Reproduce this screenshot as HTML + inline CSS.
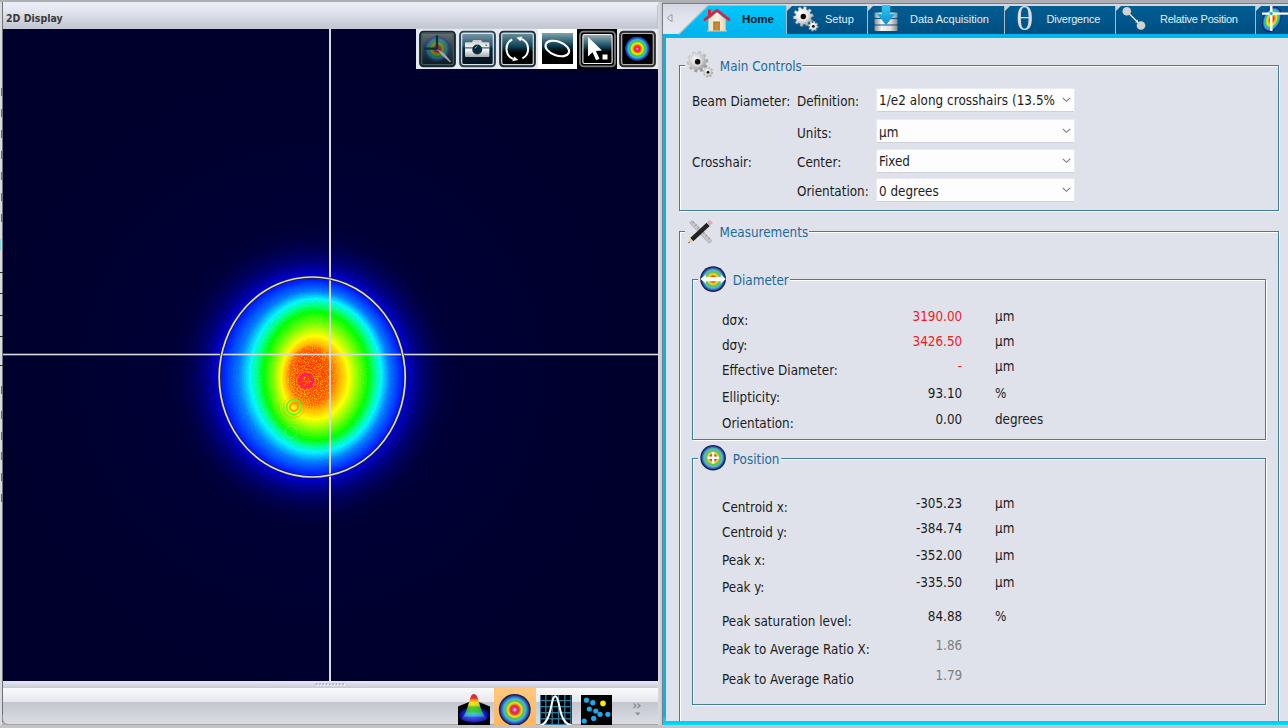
<!DOCTYPE html>
<html lang="en"><head><meta charset="utf-8"><title>2D Display</title>
<style>
html,body{margin:0;padding:0}
body{width:1288px;height:728px;position:relative;overflow:hidden;background:#b6b6b6;font-family:'DejaVu Sans Condensed','Liberation Sans',sans-serif;font-size:13.33px;color:#1c1c1c}
.a{position:absolute}
.t{position:absolute;white-space:nowrap;line-height:16px;height:16px}
.r{text-align:right}
.lg{color:#1c6a9b}
.red{color:#ee1c24}
.gr{color:#808080}
.fs{position:absolute;border:1px solid #3f7ca2;box-shadow:1px 1px 0 #fff, inset 1px 1px 0 #fff}
.cb{position:absolute;background:#fdfdfe;box-shadow:0 1px 0 #cdd0d9,0 0 0 1px rgba(236,238,244,.7);height:22px;width:197px;left:877px}
.cb span{position:absolute;left:3px;top:3px;line-height:16px;white-space:nowrap}
.cb svg{position:absolute;right:3px;top:7.800px}
.mask{position:absolute;background:#dfe2ea}
.tab{position:absolute;top:6px;height:28px;background:linear-gradient(#015d90,#01558a 60%,#004f7f)}
.tab i{position:absolute;left:0;top:0;width:1px;height:28px;background:#aeb9c4}
.tab b{position:absolute;left:1px;top:0;width:0;height:0;border-top:5px solid #c9d2da;border-right:5px solid transparent}
.tt{position:absolute;top:11.5px;line-height:14px;font-family:'Liberation Sans',sans-serif;font-size:11px;color:#e4edf4;white-space:nowrap}
</style></head><body>

<div class="a" style="left:0;top:0;width:1288px;height:3px;background:#adafb3"></div>
<div class="a" style="left:0;top:725px;width:1288px;height:3px;background:#c3c3c3"></div>
<div class="a" style="left:0;top:2px;width:2px;height:723px;background:#d9dae0"></div>
<div class="a" style="left:2px;top:2px;width:1px;height:720px;background:#707278"></div>
<div class="a" style="left:3px;top:2px;width:655px;height:27px;background:linear-gradient(#ebeef6,#e5e8f1 28%,#c3c7d2 94%,#c9cdd7)"></div>
<div class="t" style="left:6px;top:11px;font-family:'DejaVu Sans Condensed','Liberation Sans',sans-serif;font-weight:bold;font-size:10.5px;color:#3a3a3a;line-height:14px">2D Display</div>
<svg class="a" style="left:3px;top:29px" width="655" height="652" viewBox="3 29 655 652">
<rect x="3" y="29" width="655" height="652" fill="#00002d"/><defs><radialGradient id="wh"><stop offset="0" stop-color="#000038"/><stop offset=".46" stop-color="#000036"/><stop offset=".72" stop-color="#000030"/><stop offset="1" stop-color="#00002d"/></radialGradient></defs><ellipse cx="312" cy="377" rx="330" ry="330" fill="url(#wh)"/>
<ellipse cx="312.0" cy="377.0" rx="150.0" ry="157.0" fill="#000036"/>
<ellipse cx="312.0" cy="377.0" rx="147.3" ry="154.3" fill="#000037"/>
<ellipse cx="312.0" cy="377.0" rx="144.7" ry="151.7" fill="#000038"/>
<ellipse cx="312.0" cy="377.0" rx="142.0" ry="149.0" fill="#000039"/>
<ellipse cx="312.0" cy="377.0" rx="139.3" ry="146.3" fill="#00003a"/>
<ellipse cx="312.0" cy="377.0" rx="136.7" ry="143.7" fill="#00003b"/>
<ellipse cx="312.0" cy="377.0" rx="134.0" ry="141.0" fill="#00003c"/>
<ellipse cx="312.0" cy="377.0" rx="132.0" ry="139.0" fill="#00003f"/>
<ellipse cx="312.0" cy="377.0" rx="130.0" ry="137.0" fill="#000043"/>
<ellipse cx="312.0" cy="377.0" rx="128.0" ry="135.0" fill="#000046"/>
<ellipse cx="312.0" cy="377.0" rx="126.0" ry="133.0" fill="#000049"/>
<ellipse cx="312.0" cy="377.0" rx="124.0" ry="131.0" fill="#00004d"/>
<ellipse cx="312.0" cy="377.0" rx="122.0" ry="129.0" fill="#000050"/>
<ellipse cx="312.0" cy="377.0" rx="120.0" ry="127.0" fill="#000056"/>
<ellipse cx="312.0" cy="377.0" rx="118.0" ry="125.0" fill="#00005d"/>
<ellipse cx="312.0" cy="377.0" rx="116.0" ry="123.0" fill="#000063"/>
<ellipse cx="312.0" cy="377.0" rx="114.0" ry="121.0" fill="#000069"/>
<ellipse cx="312.0" cy="377.0" rx="112.0" ry="119.0" fill="#000070"/>
<ellipse cx="312.0" cy="377.0" rx="110.0" ry="117.0" fill="#000076"/>
<ellipse cx="312.0" cy="377.0" rx="108.5" ry="115.5" fill="#00007e"/>
<ellipse cx="312.0" cy="377.0" rx="107.0" ry="114.0" fill="#000086"/>
<ellipse cx="312.0" cy="377.0" rx="105.5" ry="112.5" fill="#00008e"/>
<ellipse cx="312.0" cy="377.0" rx="104.0" ry="111.0" fill="#000095"/>
<ellipse cx="312.0" cy="377.0" rx="102.5" ry="109.5" fill="#00009d"/>
<ellipse cx="312.0" cy="377.0" rx="101.0" ry="108.0" fill="#0000a5"/>
<ellipse cx="312.0" cy="377.0" rx="100.0" ry="107.0" fill="#0000ad"/>
<ellipse cx="312.0" cy="377.0" rx="99.0" ry="106.0" fill="#0000b6"/>
<ellipse cx="312.0" cy="377.0" rx="98.0" ry="105.0" fill="#0000be"/>
<ellipse cx="312.0" cy="377.0" rx="97.0" ry="104.0" fill="#0000c6"/>
<ellipse cx="312.0" cy="377.0" rx="96.0" ry="103.0" fill="#0000cf"/>
<ellipse cx="312.0" cy="377.0" rx="95.0" ry="102.0" fill="#0000d7"/>
<ellipse cx="312.0" cy="377.0" rx="94.1" ry="101.2" fill="#0006dd"/>
<ellipse cx="312.0" cy="377.0" rx="93.2" ry="100.3" fill="#000de3"/>
<ellipse cx="312.0" cy="377.0" rx="92.2" ry="99.5" fill="#0013ea"/>
<ellipse cx="312.0" cy="377.0" rx="91.3" ry="98.7" fill="#0019f0"/>
<ellipse cx="312.0" cy="377.0" rx="90.4" ry="97.8" fill="#0020f6"/>
<ellipse cx="312.0" cy="377.0" rx="89.5" ry="97.0" fill="#0026fc"/>
<ellipse cx="312.3" cy="376.9" rx="87.2" ry="95.1" fill="#0035fc"/>
<ellipse cx="312.7" cy="376.8" rx="84.8" ry="93.2" fill="#0045fd"/>
<ellipse cx="313.0" cy="376.8" rx="82.5" ry="91.2" fill="#0054fe"/>
<ellipse cx="313.3" cy="376.7" rx="80.2" ry="89.3" fill="#0063fe"/>
<ellipse cx="313.7" cy="376.6" rx="77.8" ry="87.4" fill="#0073fe"/>
<ellipse cx="314.0" cy="376.5" rx="75.5" ry="85.5" fill="#0082ff"/>
<ellipse cx="314.2" cy="376.3" rx="74.0" ry="84.2" fill="#0095ff"/>
<ellipse cx="314.5" cy="376.2" rx="72.5" ry="82.8" fill="#00a8ff"/>
<ellipse cx="314.8" cy="376.0" rx="71.0" ry="81.5" fill="#00bcff"/>
<ellipse cx="315.0" cy="375.8" rx="69.5" ry="80.2" fill="#00cfff"/>
<ellipse cx="315.2" cy="375.7" rx="68.0" ry="78.8" fill="#00e2ff"/>
<ellipse cx="315.5" cy="375.5" rx="66.5" ry="77.5" fill="#00f5ff"/>
<ellipse cx="315.6" cy="375.5" rx="65.3" ry="76.4" fill="#00f7eb"/>
<ellipse cx="315.7" cy="375.5" rx="64.2" ry="75.3" fill="#00f8d7"/>
<ellipse cx="315.8" cy="375.5" rx="63.0" ry="74.2" fill="#00fac3"/>
<ellipse cx="315.8" cy="375.5" rx="61.8" ry="73.2" fill="#00fcaf"/>
<ellipse cx="315.9" cy="375.5" rx="60.7" ry="72.1" fill="#00fd9b"/>
<ellipse cx="316.0" cy="375.5" rx="59.5" ry="71.0" fill="#00ff87"/>
<ellipse cx="316.0" cy="375.6" rx="58.4" ry="70.0" fill="#00ff70"/>
<ellipse cx="316.0" cy="375.7" rx="57.3" ry="69.0" fill="#00ff5a"/>
<ellipse cx="316.0" cy="375.8" rx="56.2" ry="68.0" fill="#00ff44"/>
<ellipse cx="316.0" cy="375.8" rx="55.2" ry="67.0" fill="#00ff2d"/>
<ellipse cx="316.0" cy="375.9" rx="54.1" ry="66.0" fill="#00ff16"/>
<ellipse cx="316.0" cy="376.0" rx="53.0" ry="65.0" fill="#00ff00"/>
<ellipse cx="316.0" cy="376.2" rx="51.3" ry="63.0" fill="#16ff00"/>
<ellipse cx="316.0" cy="376.3" rx="49.7" ry="61.0" fill="#2bff00"/>
<ellipse cx="316.0" cy="376.5" rx="48.0" ry="59.0" fill="#41ff00"/>
<ellipse cx="316.0" cy="376.7" rx="46.3" ry="57.0" fill="#57ff00"/>
<ellipse cx="316.0" cy="376.8" rx="44.7" ry="55.0" fill="#6cff00"/>
<ellipse cx="316.0" cy="377.0" rx="43.0" ry="53.0" fill="#82ff00"/>
<ellipse cx="315.8" cy="377.1" rx="41.6" ry="51.2" fill="#97ff00"/>
<ellipse cx="315.7" cy="377.2" rx="40.2" ry="49.5" fill="#acff00"/>
<ellipse cx="315.5" cy="377.2" rx="38.8" ry="47.8" fill="#c0ff00"/>
<ellipse cx="315.3" cy="377.3" rx="37.3" ry="46.0" fill="#d5ff00"/>
<ellipse cx="315.2" cy="377.4" rx="35.9" ry="44.2" fill="#eaff00"/>
<ellipse cx="315.0" cy="377.5" rx="34.5" ry="42.5" fill="#ffff00"/>
<ellipse cx="314.7" cy="377.4" rx="33.2" ry="40.9" fill="#fff100"/>
<ellipse cx="314.3" cy="377.3" rx="32.0" ry="39.3" fill="#ffe300"/>
<ellipse cx="314.0" cy="377.2" rx="30.8" ry="37.8" fill="#ffd400"/>
<ellipse cx="313.7" cy="377.2" rx="29.5" ry="36.2" fill="#ffc600"/>
<ellipse cx="313.3" cy="377.1" rx="28.2" ry="34.6" fill="#ffb800"/>
<ellipse cx="313.0" cy="377.0" rx="27.0" ry="33.0" fill="#ffaa00"/>
<ellipse cx="312.7" cy="376.8" rx="26.2" ry="32.3" fill="#ff9e00"/>
<ellipse cx="312.3" cy="376.7" rx="25.3" ry="31.7" fill="#ff9300"/>
<ellipse cx="312.0" cy="376.5" rx="24.5" ry="31.0" fill="#ff8700"/>
<ellipse cx="311.7" cy="376.3" rx="23.7" ry="30.3" fill="#ff7b00"/>
<ellipse cx="311.3" cy="376.2" rx="22.8" ry="29.7" fill="#ff7000"/>
<ellipse cx="311.0" cy="376.0" rx="22.0" ry="29.0" fill="#ff6400"/>
<ellipse cx="310.8" cy="376.0" rx="20.8" ry="27.8" fill="#ff5e00"/>
<ellipse cx="310.7" cy="376.0" rx="19.7" ry="26.7" fill="#ff5700"/>
<ellipse cx="310.5" cy="376.0" rx="18.5" ry="25.5" fill="#ff5100"/>
<ellipse cx="310.3" cy="376.0" rx="17.3" ry="24.3" fill="#ff4b00"/>
<ellipse cx="310.2" cy="376.0" rx="16.2" ry="23.2" fill="#ff4400"/>
<ellipse cx="310.0" cy="376.0" rx="15.0" ry="22.0" fill="#ff3e00"/>
<ellipse cx="309.8" cy="376.2" rx="13.7" ry="20.2" fill="#ff3c01"/>
<ellipse cx="309.7" cy="376.3" rx="12.3" ry="18.3" fill="#ff3903"/>
<ellipse cx="309.5" cy="376.5" rx="11.0" ry="16.5" fill="#ff3704"/>
<ellipse cx="309.3" cy="376.7" rx="9.7" ry="14.7" fill="#ff3505"/>
<ellipse cx="309.2" cy="376.8" rx="8.3" ry="12.8" fill="#ff3207"/>
<ellipse cx="309.0" cy="377.0" rx="7.0" ry="11.0" fill="#ff3008"/>
<defs><filter id="nz" x="0" y="0" width="1" height="1" color-interpolation-filters="sRGB"><feTurbulence type="fractalNoise" baseFrequency="0.75" numOctaves="2" seed="7" result="t"/><feColorMatrix in="t" type="matrix" values="0 0 0 0 1  0 0 0 0 .85  0 0 0 0 0  0 0 0 3.2 -1.55" result="c"/><feComposite in="c" in2="SourceGraphic" operator="in"/></filter><filter id="nz2" x="0" y="0" width="1" height="1" color-interpolation-filters="sRGB"><feTurbulence type="fractalNoise" baseFrequency="0.6" numOctaves="2" seed="11" result="t"/><feColorMatrix in="t" type="matrix" values="0 0 0 0 1  0 0 0 0 1  0 0 0 0 1  0 0 0 2.4 -1.1" result="c"/><feComposite in="c" in2="SourceGraphic" operator="in"/></filter><radialGradient id="core"><stop offset="0" stop-color="#fff"/><stop offset=".7" stop-color="#fff" stop-opacity=".8"/><stop offset="1" stop-color="#fff" stop-opacity="0"/></radialGradient><radialGradient id="halo"><stop offset="0" stop-color="#fff" stop-opacity=".0"/><stop offset=".3" stop-color="#fff" stop-opacity=".5"/><stop offset=".8" stop-color="#fff" stop-opacity=".5"/><stop offset="1" stop-color="#fff" stop-opacity="0"/></radialGradient></defs>
<ellipse cx="311" cy="377" rx="34" ry="42" fill="url(#core)" filter="url(#nz)"/>
<ellipse cx="314" cy="377" rx="90" ry="98" fill="url(#halo)" filter="url(#nz2)" opacity=".22"/>
<g fill="none">
<circle cx="306" cy="381" r="6.5" stroke="#ff1090" stroke-width="1.6"/>
<circle cx="306" cy="381" r="9.5" stroke="#ff9020" stroke-width="1" opacity=".8"/>
<circle cx="294" cy="407" r="4" stroke="#ff9a00" stroke-width="2"/><circle cx="294" cy="407" r="7.5" stroke="#50ff20" stroke-width="1.6"/>
<circle cx="294" cy="407" r="10.5" stroke="#ffb000" stroke-width="1" opacity=".8"/>
<circle cx="306" cy="381" r="12.5" stroke="#ffe000" stroke-width="1.1" opacity="0.3"/>
<circle cx="294" cy="407" r="13.5" stroke="#ffe800" stroke-width="1.1" opacity="0.3"/>
<circle cx="306" cy="381" r="15.5" stroke="#ffe000" stroke-width="1.1" opacity="0.24"/>
<circle cx="294" cy="407" r="16.5" stroke="#ffe800" stroke-width="1.1" opacity="0.24"/>
<circle cx="306" cy="381" r="18.5" stroke="#ffe000" stroke-width="1.1" opacity="0.18"/>
<circle cx="294" cy="407" r="19.5" stroke="#ffe800" stroke-width="1.1" opacity="0.18"/>
<circle cx="306" cy="381" r="21.5" stroke="#ffe000" stroke-width="1.1" opacity="0.12"/>
<circle cx="294" cy="407" r="22.5" stroke="#ffe800" stroke-width="1.1" opacity="0.12"/>
<circle cx="207" cy="389" r="7" stroke="#000048" stroke-width="1.300" opacity=".5"/>
<circle cx="291" cy="432" r="6" stroke="#a0ffe0" stroke-width="1" opacity=".35"/>
</g>
<rect x="3" y="353.700" width="655" height="1.600" fill="#dadada"/>
<rect x="329" y="29" width="2" height="652" fill="#dadada"/>
<ellipse cx="312.2" cy="377" rx="93" ry="100" fill="none" stroke="#202020" stroke-width="3"/>
<ellipse cx="312.2" cy="377" rx="93" ry="100" fill="none" stroke="#dadad6" stroke-width="1.7"/>
</svg>
<div class="a" style="left:416px;top:29px;width:242px;height:40px;background:#e6e8f0"></div>
<svg class="a" style="left:419px;top:30px" width="37" height="38" viewBox="0 0 37 38"><defs><linearGradient id="g419" x1="0" y1="0" x2="0" y2="1"><stop offset="0" stop-color="#6b7579"/><stop offset=".45" stop-color="#2a4248"/><stop offset="1" stop-color="#051a20"/></linearGradient></defs><rect x="1" y="1.600" width="35" height="34.800" rx="3.500" fill="url(#g419)" stroke="#11292f" stroke-width="1.800"/><rect x="2.700" y="3.300" width="31.600" height="31.400" rx="2" fill="none" stroke="#46585c" stroke-width="1.200"/><defs><radialGradient id="rbd"><stop offset="0" stop-color="#ffd8f0"/><stop offset="0.1" stop-color="#ff30a0"/><stop offset="0.22" stop-color="#ff1a1a"/><stop offset="0.36" stop-color="#ffb000"/><stop offset="0.46" stop-color="#f4f000"/><stop offset="0.58" stop-color="#30d030"/><stop offset="0.72" stop-color="#20c8e8"/><stop offset="0.84" stop-color="#2858e0"/><stop offset="0.94" stop-color="#3a2a90"/><stop offset="1" stop-color="#182838"/></radialGradient></defs><circle cx="18.2" cy="18.9" r="13" fill="url(#rbd)" opacity=".4"/><path d="M18 5.300V18.700H5" fill="none" stroke="#0b2f38" stroke-width="2.300"/><path d="M18.300 19.300L25 22.900 32 31.600 31.200 32.400 22.700 25.200z" fill="#a0a2a2"/></svg>
<svg class="a" style="left:459px;top:30px" width="37" height="38" viewBox="0 0 37 38"><defs><linearGradient id="g459" x1="0" y1="0" x2="0" y2="1"><stop offset="0" stop-color="#86a3b0"/><stop offset=".44" stop-color="#1d4e64"/><stop offset=".47" stop-color="#00283c"/><stop offset="1" stop-color="#000e1c"/></linearGradient></defs><rect x="1" y="1.600" width="35" height="34.800" rx="3.500" fill="url(#g459)" stroke="#2b4456" stroke-width="1.800"/><rect x="2.700" y="3.300" width="31.600" height="31.400" rx="2" fill="none" stroke="#dbe3e8" stroke-width="1.200"/><defs><linearGradient id="cm" x1="0" y1="0" x2="0" y2="1"><stop offset="0" stop-color="#c4c6c8"/><stop offset=".3" stop-color="#e8e8e8"/><stop offset=".6" stop-color="#f2f2f2"/><stop offset="1" stop-color="#a4a6a8"/></linearGradient></defs><path d="M7 12.300h5.800l1.600-2.300h7.600l1.600 2.300h5.800a1 1 0 0 1 1 1v12.700a1 1 0 0 1-1 1h-22.400a1 1 0 0 1-1-1v-12.700a1 1 0 0 1 1-1z" fill="url(#cm)"/><path d="M6 17.900h24.400" stroke="#1b4a5e" stroke-width="1"/><circle cx="18.2" cy="19.500" r="5" fill="#0a3446"/><circle cx="18.2" cy="19.500" r="3.500" fill="#062a3c"/><path d="M15.900 18.300l2.500-2.300" stroke="#a8c8d4" stroke-width="1"/><circle cx="27.200" cy="15.300" r="1.100" fill="#7a98a6"/></svg>
<svg class="a" style="left:499px;top:30px" width="37" height="38" viewBox="0 0 37 38"><defs><linearGradient id="g499" x1="0" y1="0" x2="0" y2="1"><stop offset="0" stop-color="#7698a5"/><stop offset=".42" stop-color="#0f4558"/><stop offset=".6" stop-color="#000"/><stop offset="1" stop-color="#000"/></linearGradient></defs><rect x="1" y="1.600" width="35" height="34.800" rx="3.500" fill="url(#g499)" stroke="#232e34" stroke-width="1.800"/><rect x="2.700" y="3.300" width="31.600" height="31.400" rx="2" fill="none" stroke="#d0d8dc" stroke-width="1.200"/><g fill="none" stroke="#fff" stroke-width="2"><path d="M23.37 28.44A10.8 10.8 0 0 0 22.35 8.89"/><path d="M13.23 9.36A10.8 10.8 0 0 0 14.25 28.91"/></g><path d="M23.32 6.48L21.37 11.30L17.33 7.84z" fill="#fff"/><path d="M13.28 31.32L15.23 26.50L19.27 29.96z" fill="#fff"/></svg>
<div class="a" style="left:538px;top:29px;width:39px;height:40px;background:#fff"></div>
<svg class="a" style="left:542px;top:33px" width="31" height="31" viewBox="0 0 31 31"><defs><linearGradient id="g4" x1="0" y1="0" x2="0" y2="1"><stop offset="0" stop-color="#7fa3b0"/><stop offset=".4" stop-color="#0d4052"/><stop offset=".62" stop-color="#000"/><stop offset="1" stop-color="#000"/></linearGradient></defs><rect width="31" height="31" fill="url(#g4)"/><ellipse cx="15.3" cy="15.5" rx="12.3" ry="7" transform="rotate(20 15.3 15.5)" fill="none" stroke="#fff" stroke-width="2.1"/></svg>
<div class="a" style="left:577px;top:29px;width:40px;height:40px;background:#000"></div>
<svg class="a" style="left:579px;top:30px" width="37" height="38" viewBox="0 0 37 38"><defs><linearGradient id="g579" x1="0" y1="0" x2="0" y2="1"><stop offset="0" stop-color="#9ab2bc"/><stop offset=".42" stop-color="#10465a"/><stop offset=".6" stop-color="#000"/><stop offset="1" stop-color="#000"/></linearGradient></defs><rect x="1" y="1.600" width="35" height="34.800" rx="3.500" fill="#000" stroke="#7b7b7b" stroke-width="1.800"/><rect x="3.900" y="4.500" width="29.200" height="29" rx="1.500" fill="url(#g579)" stroke="#f2f2f2" stroke-width="1.100"/><path d="M9 7v19.500l4.500-4.200 3.600 8 3.400-1.600-3.600-7.700 6.100-.5z" fill="#fff"/><rect x="23.500" y="24.500" width="5" height="5" fill="#fff"/></svg>
<svg class="a" style="left:619px;top:30px" width="37" height="38" viewBox="0 0 37 38"><defs><linearGradient id="g619" x1="0" y1="0" x2="0" y2="1"><stop offset="0" stop-color="#000"/><stop offset="1" stop-color="#000"/></linearGradient></defs><rect x="1" y="1.600" width="35" height="34.800" rx="3.500" fill="url(#g619)" stroke="#303030" stroke-width="1.800"/><rect x="2.700" y="3.300" width="31.600" height="31.400" rx="2" fill="none" stroke="#b4b4b4" stroke-width="1.200"/><defs><radialGradient id="rb6"><stop offset="0" stop-color="#ffd8f0"/><stop offset="0.1" stop-color="#ff30a0"/><stop offset="0.22" stop-color="#ff1a1a"/><stop offset="0.36" stop-color="#ffb000"/><stop offset="0.46" stop-color="#f4f000"/><stop offset="0.58" stop-color="#30d030"/><stop offset="0.72" stop-color="#20c8e8"/><stop offset="0.84" stop-color="#2858e0"/><stop offset="0.94" stop-color="#3a2a90"/><stop offset="1" stop-color="#000"/></radialGradient></defs><circle cx="18.3" cy="18.700" r="12.500" fill="url(#rb6)"/></svg>
<div class="a" style="left:3px;top:681px;width:655px;height:7px;background:linear-gradient(#e6e9f1,#c6cad7)"></div>
<svg class="a" style="left:315px;top:682px" width="32" height="6" viewBox="0 0 32 6"><rect x="1.8" y="2.2" width="1.6" height="1.6" fill="#fff"/><rect x="0.9" y="1.3" width="1.6" height="1.6" fill="#a2a6b5"/><rect x="5.1" y="2.2" width="1.6" height="1.6" fill="#fff"/><rect x="4.2" y="1.3" width="1.6" height="1.6" fill="#a2a6b5"/><rect x="8.4" y="2.2" width="1.6" height="1.6" fill="#fff"/><rect x="7.5" y="1.3" width="1.6" height="1.6" fill="#a2a6b5"/><rect x="11.7" y="2.2" width="1.6" height="1.6" fill="#fff"/><rect x="10.8" y="1.3" width="1.6" height="1.6" fill="#a2a6b5"/><rect x="15.0" y="2.2" width="1.6" height="1.6" fill="#fff"/><rect x="14.1" y="1.3" width="1.6" height="1.6" fill="#a2a6b5"/><rect x="18.3" y="2.2" width="1.6" height="1.6" fill="#fff"/><rect x="17.4" y="1.3" width="1.6" height="1.6" fill="#a2a6b5"/><rect x="21.6" y="2.2" width="1.6" height="1.6" fill="#fff"/><rect x="20.7" y="1.3" width="1.6" height="1.6" fill="#a2a6b5"/><rect x="24.9" y="2.2" width="1.6" height="1.6" fill="#fff"/><rect x="24.0" y="1.3" width="1.6" height="1.6" fill="#a2a6b5"/><rect x="28.2" y="2.2" width="1.6" height="1.6" fill="#fff"/><rect x="27.3" y="1.3" width="1.6" height="1.6" fill="#a2a6b5"/></svg>
<div class="a" style="left:3px;top:688px;width:655px;height:37px;border-radius:0 0 0 5px;background:linear-gradient(#fafafb,#e7e8ed 37%,#c3c6cf 38%,#dddee4)"></div>
<div class="a" style="left:2px;top:715px;width:20px;height:10px;border-left:1px solid #8d8f96;border-bottom:1px solid #9a9ca3;border-radius:0 0 0 6px;box-sizing:border-box"></div>
<div class="a" style="left:8px;top:724px;width:650px;height:1px;background:#a4a6ad"></div>
<div class="a" style="left:657px;top:5px;width:1px;height:24px;background:#bfc2cc"></div>
<div class="a" style="left:494px;top:688px;width:42px;height:37px;background:linear-gradient(#ffc880,#ffb65e)"></div>
<svg class="a" style="left:458px;top:692px" width="32" height="33" viewBox="0 0 32 33">
<defs><linearGradient id="pk" x1="0" y1="2" x2="0" y2="29" gradientUnits="userSpaceOnUse"><stop offset="0" stop-color="#c80830"/><stop offset=".15" stop-color="#f01010"/><stop offset=".22" stop-color="#ff8000"/><stop offset=".3" stop-color="#f8d800"/><stop offset=".41" stop-color="#f0e000"/><stop offset=".48" stop-color="#38c818"/><stop offset=".64" stop-color="#28c020"/><stop offset=".72" stop-color="#20c8c0"/><stop offset=".8" stop-color="#28a8e8"/><stop offset=".88" stop-color="#2030f0"/><stop offset="1" stop-color="#1810b0"/></linearGradient>
<radialGradient id="bs" cx=".5" cy=".5" r=".5"><stop offset="0" stop-color="#2828ff"/><stop offset=".72" stop-color="#1c14d8"/><stop offset="1" stop-color="#060338"/></radialGradient>
<linearGradient id="sh" x1="0" y1="0" x2="1" y2="0"><stop offset="0" stop-color="#000" stop-opacity=".3"/><stop offset=".45" stop-color="#fff" stop-opacity=".12"/><stop offset="1" stop-color="#000" stop-opacity=".25"/></linearGradient></defs>
<path d="M0 14.500L16 8 32 14.500V33H0z" fill="#000"/>
<ellipse cx="16" cy="23" rx="15.600" ry="8.200" fill="url(#bs)"/>
<path id="pkp" d="M15.700 2c-2 0-3 2.500-3.700 5-1 3.500-2.300 8-3.800 12-1.200 3.200-2.700 6-5.200 8 3 3.500 23 3.500 26 0-2.500-2-4-4.800-5.200-8-1.500-4-2.800-8.500-3.800-12-.7-2.500-2-5-4.300-5z" fill="url(#pk)"/>
<path d="M15.700 2c-2 0-3 2.500-3.700 5-1 3.500-2.300 8-3.800 12-1.200 3.200-2.700 6-5.200 8 3 3.500 23 3.500 26 0-2.500-2-4-4.800-5.200-8-1.500-4-2.800-8.500-3.800-12-.7-2.500-2-5-4.300-5z" fill="url(#sh)"/>
</svg>
<svg class="a" style="left:498px;top:693px" width="34" height="32" viewBox="0 0 34 32"><defs><radialGradient id="rb2"><stop offset="0" stop-color="#fff4ff"/><stop offset="0.1" stop-color="#cc58b8"/><stop offset="0.24" stop-color="#e82030"/><stop offset="0.36" stop-color="#f49018"/><stop offset="0.44" stop-color="#f0e424"/><stop offset="0.56" stop-color="#58bc48"/><stop offset="0.68" stop-color="#40c0cc"/><stop offset="0.8" stop-color="#3470d0"/><stop offset="0.89" stop-color="#28409c"/><stop offset="0.94" stop-color="#181e48"/><stop offset="1" stop-color="#181e48"/></radialGradient></defs><circle cx="16.750" cy="16.800" r="15.900" fill="url(#rb2)"/></svg>
<svg class="a" style="left:540px;top:695px" width="32" height="30" viewBox="0 0 32 30"><rect width="32" height="30" fill="#000"/><g stroke="#347ea1" stroke-width="1.300" fill="none"><path d="M0.3 0V30" /><path d="M5.8 0V30" /><path d="M12.2 0V30" /><path d="M18.5 0V30" /><path d="M24.8 0V30" /><path d="M30.9 0V30" /><path d="M0 5.6H31"/><path d="M0 11.7H31"/><path d="M0 17.7H31"/><path d="M0 23.8H31"/><path d="M0 29.5H31"/></g><path d="M0 30.500C6 29.500 8.800 22 10.400 15S13 1.300 15.200 1.300 18.800 8 20.200 15 24.800 29.500 32 30.500" fill="none" stroke="#fff" stroke-width="2"/></svg>
<svg class="a" style="left:581px;top:695px" width="31" height="30" viewBox="581 695 31 30"><rect x="581" y="695" width="31" height="30" fill="#000"/><circle cx="586.5" cy="700.2" r="2.600" fill="#1fa9ea"/><circle cx="592.8" cy="702.7" r="2.600" fill="#1fa9ea"/><circle cx="589.3" cy="709.0" r="2.600" fill="#1fa9ea"/><circle cx="595.8" cy="711.0" r="2.600" fill="#1fa9ea"/><circle cx="600.0" cy="714.3" r="2.600" fill="#1fa9ea"/><circle cx="607.8" cy="714.3" r="2.600" fill="#1fa9ea"/><circle cx="593.7" cy="718.4" r="2.600" fill="#1fa9ea"/><circle cx="584.2" cy="721.0" r="2.600" fill="#1fa9ea"/><circle cx="603" cy="703.4" r="2.800" fill="#f6f000"/></svg>
<svg class="a" style="left:632px;top:702px" width="10" height="15" viewBox="0 0 10 15"><path d="M1.500 1.500L4 3.800 1.500 6.100M5.500 1.500L8 3.800 5.500 6.100" fill="none" stroke="#8c8c8c" stroke-width="1.350"/><path d="M3 10.500h5.500L5.750 13.500z" fill="#8c8c8c"/></svg>
<div class="a" style="left:658px;top:2px;width:4px;height:723px;background:linear-gradient(90deg,#d9dbe5,#c6c8d2)"></div>
<div class="a" style="left:662px;top:3px;width:626px;height:1px;background:#7e7e7e"></div>
<div class="a" style="left:662px;top:4px;width:1px;height:721px;background:#7c7e83"></div>
<div class="a" style="left:663px;top:4px;width:625px;height:30px;background:linear-gradient(#d5d8e2,#e2e5ee 50%,#e6e8f0)"></div>
<div class="a" style="left:663px;top:34px;width:625px;height:691px;background:#00b7ee"></div>
<div class="a" style="left:663px;top:715px;width:625px;height:10px;background:linear-gradient(#00b7ee,#00dcf8 60%)"></div>
<div class="a" style="left:666px;top:38px;width:622px;height:683px;background:#dfe2ea"></div>
<svg class="a" style="left:666px;top:13px" width="8" height="10" viewBox="0 0 8 10"><path d="M6 1.200L1.200 5 6 8.800z" fill="none" stroke="#9a9a9a" stroke-width="1"/></svg>
<svg class="a" style="left:676px;top:4px" width="112" height="31" viewBox="676 4 112 31"><defs><linearGradient id="hm" x1="0" y1="0" x2="0" y2="1"><stop offset="0" stop-color="#00c8fa"/><stop offset="1" stop-color="#00b2ec"/></linearGradient></defs><path d="M678 35L708 5.500H786V35z" fill="url(#hm)"/><path d="M678.500 34.500L708 5.500" stroke="#b9bdc8" stroke-width="1.200" fill="none"/></svg>
<svg class="a" style="left:703px;top:7px" width="28" height="25" viewBox="0 0 28 25">
<defs><linearGradient id="wl" x1="0" y1="0" x2="1" y2="0"><stop offset="0" stop-color="#e9dcc0"/><stop offset=".5" stop-color="#fbf3e0"/><stop offset="1" stop-color="#e3d3b3"/></linearGradient></defs>
<path d="M5.300 12.500L14 5.200 22.700 12.500V24H5.300z" fill="url(#wl)"/>
<rect x="10.300" y="14.500" width="6.500" height="9.500" fill="#a86a22"/><rect x="11.300" y="15.500" width="4.500" height="8.500" fill="#c58a3a"/>
<path d="M5 2.600h3v5.500h-3z" fill="#d8203a"/>
<path d="M1.900 12.600L14 3.200l12.100 9.400" fill="none" stroke="#e0203c" stroke-width="2.600" stroke-linejoin="round" stroke-linecap="round"/>
<path d="M4 24h20" stroke="#d8cdb4" stroke-width="1"/>
</svg>
<div class="tt" style="left:742px;top:12px;font-weight:bold;color:#05131c;font-size:11.5px">Home</div>
<div class="tab" style="left:786px;width:81px"><i></i><b></b></div>
<div class="tab" style="left:867px;width:137px"><i></i><b></b></div>
<div class="tab" style="left:1004px;width:111px"><i></i><b></b></div>
<div class="tab" style="left:1115px;width:140px"><i></i><b></b></div>
<div class="tab" style="left:1255px;width:33px"><i></i><b></b></div>
<div class="tt" style="left:825px">Setup</div>
<div class="tt" style="left:910px">Data Acquisition</div>
<div class="tt" style="left:1046.5px;letter-spacing:-.2px">Divergence</div>
<div class="tt" style="left:1160px;letter-spacing:-.25px">Relative Position</div>
<svg class="a" style="left:792px;top:6px" width="28" height="27" viewBox="0 0 28 27"><defs><radialGradient id="gg" cx=".35" cy=".3" r=".8"><stop offset="0" stop-color="#fff"/><stop offset=".6" stop-color="#d8d8d8"/><stop offset="1" stop-color="#8c8c8c"/></radialGradient></defs><path d="M11.29 2.80L12.04 0.53L14.50 1.03L14.31 3.41L15.82 4.27L17.76 2.87L19.46 4.72L17.90 6.53L18.62 8.11L21.01 8.12L21.30 10.62L18.97 11.17L18.63 12.87L20.55 14.29L19.32 16.47L17.11 15.55L15.83 16.72L16.56 19.00L14.28 20.05L13.03 18.00L11.31 18.20L10.56 20.47L8.10 19.97L8.29 17.59L6.78 16.73L4.84 18.13L3.14 16.28L4.70 14.47L3.98 12.89L1.59 12.88L1.30 10.38L3.63 9.83L3.97 8.13L2.05 6.71L3.28 4.53L5.49 5.45L6.77 4.28L6.04 2.00L8.32 0.95L9.57 3.00z" fill="url(#gg)" stroke="#a8a8a8" stroke-width=".4" stroke-linejoin="round"/><circle cx="11.3" cy="10.5" r="4.3" fill="none" stroke="#fff" stroke-opacity=".5" stroke-width="1"/><circle cx="11.3" cy="10.5" r="2.7" fill="#0a0a0a"/><path d="M21.12 16.70L21.51 15.30L23.05 15.62L22.87 17.06L23.71 17.63L24.98 16.92L25.85 18.22L24.70 19.12L24.90 20.12L26.30 20.51L25.98 22.05L24.54 21.87L23.97 22.71L24.68 23.98L23.38 24.85L22.48 23.70L21.48 23.90L21.09 25.30L19.55 24.98L19.73 23.54L18.89 22.97L17.62 23.68L16.75 22.38L17.90 21.48L17.70 20.48L16.30 20.09L16.62 18.55L18.06 18.73L18.63 17.89L17.92 16.62L19.22 15.75L20.12 16.90z" fill="url(#gg)" stroke="#a8a8a8" stroke-width=".4" stroke-linejoin="round"/><circle cx="21.3" cy="20.3" r="3.0" fill="none" stroke="#fff" stroke-opacity=".5" stroke-width="1"/><circle cx="21.3" cy="20.3" r="1.4" fill="#0a0a0a"/></svg>
<svg class="a" style="left:873px;top:5px" width="26" height="27" viewBox="0 0 26 27">
<defs><linearGradient id="dk" x1="0" y1="0" x2="1" y2="0"><stop offset="0" stop-color="#8e8e8e"/><stop offset=".3" stop-color="#f4f4f4"/><stop offset=".7" stop-color="#e0e0e0"/><stop offset="1" stop-color="#8a8a8a"/></linearGradient>
<linearGradient id="ar" x1="0" y1="0" x2="0" y2="1"><stop offset="0" stop-color="#2ccbf4"/><stop offset="1" stop-color="#128ac6"/></linearGradient></defs>
<rect x="1.500" y="7.500" width="23" height="5.500" rx="1" fill="url(#dk)"/><rect x="1.500" y="14" width="23" height="5.500" rx="1" fill="url(#dk)"/><rect x="1.500" y="20.500" width="23" height="5.500" rx="1" fill="url(#dk)"/>
<path d="M8.800 0h8.400v9h4.800L13 20 4 9H8.800z" fill="url(#ar)"/></svg>
<div class="a" style="left:1015.5px;top:1px;font-family:'Liberation Serif',serif;font-size:33px;line-height:36px;color:#d9dde2;transform:scaleX(1.1);transform-origin:0 0">θ</div>
<svg class="a" style="left:1120px;top:5px" width="28" height="28" viewBox="1120 5 28 28"><path d="M1127 11.500L1141 25.500" stroke="#dcdcdc" stroke-width="1.600"/><path d="M1138 19.500v3h-3z" fill="#e6e6e6" transform="rotate(0)"/><circle cx="1126.800" cy="11.200" r="4.300" fill="#d2d2d2"/><circle cx="1141" cy="25.500" r="4.300" fill="#d2d2d2"/></svg>
<svg class="a" style="left:1258px;top:5px" width="30" height="30" viewBox="1258 5 30 30"><defs><radialGradient id="rbe"><stop offset="0" stop-color="#ff60a0"/><stop offset="0.18" stop-color="#ff2020"/><stop offset="0.36" stop-color="#ffb000"/><stop offset="0.5" stop-color="#e8f020"/><stop offset="0.64" stop-color="#30d040"/><stop offset="0.78" stop-color="#30b0f0"/><stop offset="0.9" stop-color="#3040c0"/><stop offset="1" stop-color="#0c1030"/></radialGradient></defs><ellipse cx="1271.800" cy="19.300" rx="8.800" ry="13.300" transform="rotate(25 1271.800 19.300)" fill="url(#rbe)"/><rect x="1270" y="6" width="2.500" height="25" fill="#fff"/><rect x="1262" y="12.500" width="26" height="2.200" fill="#fff"/><circle cx="1271.200" cy="13.500" r="1.600" fill="#18a0e8"/></svg>
<div class="fs" style="left:679px;top:65px;width:598px;height:144px"></div>
<div class="fs" style="left:679px;top:231px;width:598px;height:518px"></div>
<div class="fs" style="left:692px;top:279px;width:572px;height:159px"></div>
<div class="fs" style="left:692px;top:458px;width:572px;height:245px"></div>
<div class="a" style="left:663px;top:721px;width:625px;height:4px;background:linear-gradient(#00c8f2,#00e0fa)"></div>
<div class="a" style="left:658px;top:725px;width:630px;height:3px;background:#c3c3c3"></div>
<div class="mask" style="left:685px;top:52px;width:117px;height:26px"></div>
<div class="mask" style="left:685px;top:218px;width:124px;height:26px"></div>
<div class="mask" style="left:698px;top:266px;width:92px;height:27px"></div>
<div class="mask" style="left:698px;top:445px;width:83px;height:27px"></div>
<div class="t lg" style="left:719.8px;top:59.2px;">Main Controls</div>
<div class="t lg" style="left:719.6px;top:225px;">Measurements</div>
<div class="t lg" style="left:732.8px;top:273.4px;">Diameter</div>
<div class="t lg" style="left:732.8px;top:452px;">Position</div>
<svg class="a" style="left:686px;top:51px" width="29" height="28" viewBox="0 0 29 28"><defs><radialGradient id="gg2" cx=".35" cy=".3" r=".8"><stop offset="0" stop-color="#f0f0f0"/><stop offset=".55" stop-color="#c4c4c4"/><stop offset="1" stop-color="#808080"/></radialGradient></defs><path d="M11.59 2.80L12.37 0.43L14.93 0.95L14.72 3.43L16.30 4.32L18.32 2.86L20.08 4.78L18.46 6.68L19.21 8.32L21.70 8.33L22.00 10.92L19.57 11.49L19.21 13.26L21.22 14.74L19.94 17.01L17.64 16.05L16.31 17.27L17.07 19.64L14.70 20.73L13.40 18.59L11.61 18.80L10.83 21.17L8.27 20.65L8.48 18.17L6.90 17.28L4.88 18.74L3.12 16.82L4.74 14.92L3.99 13.28L1.50 13.27L1.20 10.68L3.63 10.11L3.99 8.34L1.98 6.86L3.26 4.59L5.56 5.55L6.89 4.33L6.13 1.96L8.50 0.87L9.80 3.01z" fill="url(#gg2)" stroke="#a8a8a8" stroke-width=".4" stroke-linejoin="round"/><circle cx="11.6" cy="10.8" r="4.3" fill="none" stroke="#fff" stroke-opacity=".5" stroke-width="1"/><circle cx="11.6" cy="10.8" r="2.7" fill="#0a0a0a"/><path d="M21.82 17.60L22.21 16.20L23.75 16.52L23.57 17.96L24.41 18.53L25.68 17.82L26.55 19.12L25.40 20.02L25.60 21.02L27.00 21.41L26.68 22.95L25.24 22.77L24.67 23.61L25.38 24.88L24.08 25.75L23.18 24.60L22.18 24.80L21.79 26.20L20.25 25.88L20.43 24.44L19.59 23.87L18.32 24.58L17.45 23.28L18.60 22.38L18.40 21.38L17.00 20.99L17.32 19.45L18.76 19.63L19.33 18.79L18.62 17.52L19.92 16.65L20.82 17.80z" fill="url(#gg2)" stroke="#a8a8a8" stroke-width=".4" stroke-linejoin="round"/><circle cx="22.0" cy="21.2" r="2.9" fill="none" stroke="#fff" stroke-opacity=".5" stroke-width="1"/><circle cx="22.0" cy="21.2" r="1.3" fill="#0a0a0a"/></svg>
<svg class="a" style="left:686.700px;top:218.500px" width="27.500" height="26.500" viewBox="0 0 26 25">
<path d="M2.500 3.500L5 1.500 23.500 20.500 21 23z" fill="#c9c9c9" stroke="#9a9a9a" stroke-width=".6"/>
<path d="M5 4l1.500-1.200M7.500 6.500L9 5.300M10 9l1.500-1.200M12.500 11.500L14 10.300M15 14l1.500-1.200M17.500 16.500L19 15.300M20 19l1.500-1.200" stroke="#777" stroke-width=".7"/>
<path d="M18.500 3.500L21.500 6.500 6 21 3 18z" fill="#222"/><path d="M19.500 2.500l2-1.700 3 3-2 1.700z" fill="#f0a0b0"/><path d="M18.500 3.500l1-1 3 3-1 1z" fill="#bbb"/>
<path d="M3 18l3 3-4.800 2z" fill="#e8c890"/><path d="M1.200 23l1.500-.6-.9-.9z" fill="#222"/>
</svg>
<svg class="a" style="left:699px;top:265px" width="29" height="29" viewBox="699 265 29 29"><defs><radialGradient id="rbs"><stop offset="0" stop-color="#d81c28"/><stop offset="0.16" stop-color="#dc2420"/><stop offset="0.27" stop-color="#f08020"/><stop offset="0.38" stop-color="#f0e030"/><stop offset="0.54" stop-color="#68c048"/><stop offset="0.66" stop-color="#58c0b0"/><stop offset="0.75" stop-color="#48a0d8"/><stop offset="0.86" stop-color="#2850a8"/><stop offset="0.94" stop-color="#182048"/><stop offset="1" stop-color="#182048"/></radialGradient></defs><circle cx="713.100" cy="279.100" r="12.900" fill="url(#rbs)"/><path d="M700.400 279.100L706 274.600V277H720.800V274.600L725.800 279.100 720.800 283.600V281.200H706V283.600z" fill="#fff"/></svg>
<svg class="a" style="left:699px;top:444px" width="29" height="29" viewBox="699 444 29 29"><defs><radialGradient id="rbs2"><stop offset="0" stop-color="#d81c28"/><stop offset="0.24" stop-color="#dc2420"/><stop offset="0.3" stop-color="#f08020"/><stop offset="0.38" stop-color="#f0e030"/><stop offset="0.54" stop-color="#68c048"/><stop offset="0.66" stop-color="#58c0b0"/><stop offset="0.75" stop-color="#48a0d8"/><stop offset="0.86" stop-color="#2850a8"/><stop offset="0.94" stop-color="#182048"/><stop offset="1" stop-color="#182048"/></radialGradient></defs><circle cx="713.100" cy="457.700" r="12.800" fill="url(#rbs2)"/><path d="M713.100 452V463.500M707.600 457.750H718.800" stroke="#fff" stroke-width="2.500" fill="none"/></svg>
<div class="t " style="left:692px;top:94.4px;">Beam Diameter:</div>
<div class="t " style="left:797px;top:94.4px;">Definition:</div>
<div class="t " style="left:797px;top:125.8px;">Units:</div>
<div class="t " style="left:692px;top:155.1px;">Crosshair:</div>
<div class="t " style="left:797px;top:155.1px;">Center:</div>
<div class="t " style="left:797px;top:184.4px;">Orientation:</div>
<div class="cb" style="top:89px"><svg width="9" height="6" viewBox="0 0 9 6"><path d="M.8 .8L4.500 4.300 8.200 .8" fill="none" stroke="#7c7c7c" stroke-width="1.150"/></svg></div>
<div class="t " style="left:879px;top:93.3px;letter-spacing:0.05px">1/e2 along crosshairs (13.5%</div>
<div class="cb" style="top:120px"><svg width="9" height="6" viewBox="0 0 9 6"><path d="M.8 .8L4.500 4.300 8.200 .8" fill="none" stroke="#7c7c7c" stroke-width="1.150"/></svg></div>
<div class="t " style="left:879px;top:124.6px;letter-spacing:0px">µm</div>
<div class="cb" style="top:150px"><svg width="9" height="6" viewBox="0 0 9 6"><path d="M.8 .8L4.500 4.300 8.200 .8" fill="none" stroke="#7c7c7c" stroke-width="1.150"/></svg></div>
<div class="t " style="left:879px;top:154.2px;letter-spacing:0px">Fixed</div>
<div class="cb" style="top:179px"><svg width="9" height="6" viewBox="0 0 9 6"><path d="M.8 .8L4.500 4.300 8.200 .8" fill="none" stroke="#7c7c7c" stroke-width="1.150"/></svg></div>
<div class="t " style="left:879px;top:183.9px;letter-spacing:0px">0 degrees</div>
<div class="t " style="left:722px;top:312.9px;">dσx:</div>
<div class="t r red" style="left:842.2px;width:120px;top:308.9px;">3190.00</div>
<div class="t " style="left:995px;top:308.9px;">µm</div>
<div class="t " style="left:722px;top:338.1px;">dσy:</div>
<div class="t r red" style="left:842.2px;width:120px;top:333.9px;">3426.50</div>
<div class="t " style="left:995px;top:333.9px;">µm</div>
<div class="t " style="left:722px;top:363.4px;">Effective Diameter:</div>
<div class="t r red" style="left:842.2px;width:120px;top:359.4px;">-</div>
<div class="t " style="left:995px;top:359.4px;">µm</div>
<div class="t " style="left:722px;top:390.4px;">Ellipticity:</div>
<div class="t r " style="left:842.2px;width:120px;top:385.9px;">93.10</div>
<div class="t " style="left:995px;top:385.9px;">%</div>
<div class="t " style="left:722px;top:415.7px;">Orientation:</div>
<div class="t r " style="left:842.2px;width:120px;top:411.9px;">0.00</div>
<div class="t " style="left:995px;top:411.9px;">degrees</div>
<div class="t " style="left:722px;top:500px;">Centroid x:</div>
<div class="t r " style="left:842.2px;width:120px;top:496px;">-305.23</div>
<div class="t " style="left:995px;top:496px;">µm</div>
<div class="t " style="left:722px;top:524.9px;">Centroid y:</div>
<div class="t r " style="left:842.2px;width:120px;top:520.8px;">-384.74</div>
<div class="t " style="left:995px;top:520.8px;">µm</div>
<div class="t " style="left:722px;top:553px;">Peak x:</div>
<div class="t r " style="left:842.2px;width:120px;top:548.2px;">-352.00</div>
<div class="t " style="left:995px;top:548.2px;">µm</div>
<div class="t " style="left:722px;top:580px;">Peak y:</div>
<div class="t r " style="left:842.2px;width:120px;top:575.4px;">-335.50</div>
<div class="t " style="left:995px;top:575.4px;">µm</div>
<div class="t " style="left:722px;top:613.6px;">Peak saturation level:</div>
<div class="t r " style="left:842.2px;width:120px;top:608.6px;">84.88</div>
<div class="t " style="left:995px;top:608.6px;">%</div>
<div class="t " style="left:722px;top:641.8px;">Peak to Average Ratio X:</div>
<div class="t r gr" style="left:842.2px;width:120px;top:638.4px;">1.86</div>
<div class="t " style="left:722px;top:672.1px;">Peak to Average Ratio</div>
<div class="t r gr" style="left:842.2px;width:120px;top:667.7px;">1.79</div>
<div class="a" style="left:1px;top:88px;width:1px;height:8px;background:#a0602a"></div>
<div class="a" style="left:1px;top:109px;width:1px;height:8px;background:#a0602a"></div>
<div class="a" style="left:1px;top:130px;width:1px;height:8px;background:#a0602a"></div>
<div class="a" style="left:1px;top:151px;width:1px;height:8px;background:#a0602a"></div>
<div class="a" style="left:1px;top:172px;width:1px;height:8px;background:#a0602a"></div>
<div class="a" style="left:1px;top:193px;width:1px;height:8px;background:#a0602a"></div>
<div class="a" style="left:1px;top:214px;width:1px;height:8px;background:#a0602a"></div>
<div class="a" style="left:1px;top:386px;width:1px;height:8px;background:#a0602a"></div>
<div class="a" style="left:1px;top:411px;width:1px;height:8px;background:#a0602a"></div>
<div class="a" style="left:1px;top:432px;width:1px;height:8px;background:#a0602a"></div>
<div class="a" style="left:1px;top:452px;width:1px;height:8px;background:#a0602a"></div>
<div class="a" style="left:1px;top:473px;width:1px;height:8px;background:#a0602a"></div>
<div class="a" style="left:1px;top:494px;width:1px;height:8px;background:#a0602a"></div>
<div class="a" style="left:0;top:239px;width:1px;height:11px;background:#7fd6e6"></div>
<div class="a" style="left:0;top:272px;width:3px;height:1px;background:#2a2a2a"></div>
<div class="a" style="left:0;top:293px;width:3px;height:1px;background:#2a2a2a"></div>
<div class="a" style="left:0;top:315px;width:3px;height:1px;background:#2a2a2a"></div>
<div class="a" style="left:0;top:336px;width:3px;height:1px;background:#2a2a2a"></div>
<div class="a" style="left:0;top:365px;width:3px;height:1px;background:#2a2a2a"></div>
</body></html>
